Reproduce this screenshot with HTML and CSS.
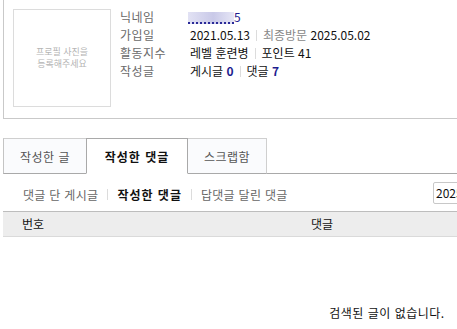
FILE: index.html
```html
<!DOCTYPE html>
<html lang="ko">
<head>
<meta charset="utf-8">
<title>회원 정보</title>
<link rel="stylesheet" href="styles.css">
</head>
<body>
<div class="page">
  <div class="profile">
    <div class="photo"><span>프로필 사진을<br>등록해주세요</span></div>
    <div class="info">
      <div class="row"><span class="label">닉네임</span><span class="value"><span class="nick"><span class="blur"></span>5</span></span></div>
      <div class="row"><span class="label">가입일</span><span class="value">2021.05.13<span class="sep"></span><span class="muted">최종방문</span> 2025.05.02</span></div>
      <div class="row"><span class="label">활동지수</span><span class="value">레벨 훈련병<span class="sep"></span>포인트 41</span></div>
      <div class="row"><span class="label">작성글</span><span class="value">게시글 <b class="num">0</b><span class="sep"></span>댓글 <b class="num">7</b></span></div>
    </div>
  </div>

  <div class="tabs">
    <a class="tab tab-first">작성한 글</a>
    <a class="tab tab-active">작성한 댓글</a>
    <a class="tab tab-last">스크랩함</a>
    <span class="tab-fill"></span>
  </div>

  <div class="subnav">
    <div class="subnav-links">
      <a class="sublink">댓글 단 게시글</a><span class="subsep"></span><a class="sublink on">작성한 댓글</a><span class="subsep"></span><a class="sublink">답댓글 달린 댓글</a>
    </div>
    <div class="search">
      <input class="date" type="text" value="2025.05.02">
    </div>
  </div>

  <table class="list">
    <colgroup><col class="c-num"><col class="c-body"><col class="c-date"></colgroup>
    <thead>
      <tr><th>번호</th><th>댓글</th><th></th></tr>
    </thead>
    <tbody>
      <tr><td class="empty" colspan="3">검색된 글이 없습니다.</td></tr>
    </tbody>
  </table>
</div>
</body>
</html>
```

FILE: styles.css
```css
* { box-sizing: border-box; }
html, body { margin: 0; padding: 0; background: #fff; }
body {
  font-family: "Noto Sans CJK KR", "Noto Sans", sans-serif;
  font-size: 12px;
  color: #111;
  overflow: hidden;
}
.page {
  margin-left: 3px;
  width: 768px;
}

/* profile */
.profile {
  display: flex;
  align-items: flex-start;
  border-left: 1px solid #c9c9c9;
  border-bottom: 1px solid #c9c9c9;
  padding: 8px 0 11px 9px;
}
.photo {
  width: 98px;
  height: 98px;
  margin-top: 1px;
  border: 1px solid #dcdcdc;
  display: flex;
  align-items: center;
  justify-content: center;
  text-align: center;
  font-size: 9px;
  line-height: 12px;
  color: #b4b4b4;
}
.info {
  margin-left: 9px;
}
.row {
  display: flex;
  line-height: 18px;
  height: 18px;
}
.label {
  width: 70px;
  color: #6a6a6a;
  letter-spacing: 0.5px;
}
.value {
  color: #111;
  white-space: nowrap;
}
.muted { color: #888; }
.sep {
  display: inline-block;
  vertical-align: -1px;
  width: 1px;
  height: 11px;
  background: #dcdcdc;
  margin: 0 6px;
}
.num {
  color: #1d1d8f;
  font-weight: bold;
}
.nick {
  color: #1d1d8f;
}
.blur {
  display: inline-block;
  vertical-align: -2px;
  width: 46px;
  height: 12px;
  margin-left: -2px;
  background: linear-gradient(90deg, #e2e2f4 0%, #c9c9e8 55%, #e6e6f6 100%);
  border-bottom: 2px dotted #2a2a98;
  filter: blur(0.6px);
}

/* tabs */
.tabs {
  display: flex;
  margin-top: 19px;
  height: 36px;
}
.tab {
  height: 36px;
  display: flex;
  align-items: center;
  justify-content: center;
  font-size: 12px;
  color: #555;
  background: #fafbfd;
  border-top: 1px solid #cfcfcf;
  border-bottom: 1px solid #a9a9a9;
  text-decoration: none;
  letter-spacing: 0.5px;
}
.tab-first {
  width: 83px;
  border-left: 1px solid #c4c4c4;
}
.tab-active {
  width: 102px;
  background: #fff;
  color: #111;
  font-weight: bold;
  letter-spacing: 1px;
  border: 1px solid #a9a9a9;
  border-bottom-color: #fff;
}
.tab-last {
  width: 79px;
  border-right: 1px solid #cfcfcf;
}
.tab-fill {
  flex: 1;
  border-bottom: 1px solid #a9a9a9;
}

/* sub navigation */
.subnav {
  display: flex;
  justify-content: space-between;
  align-items: center;
  height: 37px;
  padding-left: 20px;
}
.subnav-links {
  display: flex;
  align-items: center;
  padding-top: 3px;
}
.sublink {
  color: #666;
  text-decoration: none;
  letter-spacing: 0.3px;
}
.sublink.on {
  color: #111;
  font-weight: bold;
  letter-spacing: 1px;
}
.subsep {
  display: inline-block;
  width: 1px;
  height: 11px;
  background: #dcdcdc;
  margin: 0 9px;
}
.search {
  width: 338px;
  display: flex;
}
.date {
  width: 110px;
  height: 22px;
  border: 1px solid #c8c8c8;
  border-radius: 2px;
  padding: 0 2px;
  font-family: "Noto Sans CJK KR", "Noto Sans", sans-serif;
  font-size: 12px;
  color: #111;
  outline: none;
}

/* table */
.list {
  width: 768px;
  border-collapse: collapse;
  table-layout: fixed;
}
.c-num { width: 60px; }
.c-body { width: 518px; }
.c-date { width: 190px; }
.list thead tr {
  background: #ededed;
  border-top: 1px solid #bdbdbd;
  border-bottom: 1px solid #dadada;
}
.list th {
  height: 24px;
  padding: 0;
  font-weight: normal;
  color: #111;
  text-align: center;
  line-height: 24px;
}
.empty {
  padding: 67px 0 20px;
  text-align: center;
  line-height: 18px;
  color: #111;
  letter-spacing: 0.5px;
}
```
